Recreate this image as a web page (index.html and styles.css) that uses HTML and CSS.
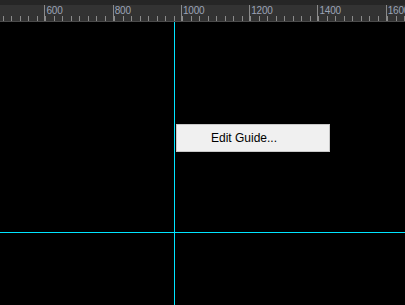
FILE: index.html
```html
<!DOCTYPE html>
<html>
    <head>
        <title>Guides</title>
        <meta charset="utf-8" />
        <link rel="stylesheet" href="styles.css">
    </head>
    <body>
        <div class="topStrip"></div>
        <div class="ruler">
            <div class="rulerTrack">
                <div class="seg"><span></span></div>
                <div class="seg major"><span>600</span></div>
                <div class="seg major"><span>800</span></div>
                <div class="seg major"><span>1000</span></div>
                <div class="seg major"><span>1200</span></div>
                <div class="seg major"><span>1400</span></div>
                <div class="seg major"><span>1600</span></div>
            </div>
        </div>
        <div class="canvas">
            <div class="guide vertical"></div>
            <div class="guide horizontal"></div>
            <div class="contextMenu">
                <div class="menuItem">Edit Guide...</div>
            </div>
        </div>
    </body>
</html>
```

FILE: styles.css
```css
html, body {
    margin: 0;
    height: 100%;
    background: #000;
    overflow: hidden;
}
.topStrip {
    height: 5px;
    background: #262626;
}
.ruler {
    height: 16px;
    background: #333333;
    border-bottom: 1px solid #4a4a4a;
    overflow: hidden;
}
.rulerTrack {
    display: flex;
    margin-left: -23.8px;
    height: 100%;
}
.seg {
    flex: 0 0 68.25px;
    height: 100%;
    box-sizing: border-box;
    background: repeating-linear-gradient(to right, #8a8a8a 0 1px, transparent 1px 8.53px) bottom left / 100% 5px no-repeat;
    border-left: 1px solid #8a8a8a;
    font-family: "Liberation Sans", sans-serif;
    font-size: 10px;
    color: #9ba3b6;
    line-height: 10px;
}
.seg span {
    display: block;
    padding: 1px 0 0 1px;
    letter-spacing: -0.2px;
}
.canvas {
    position: relative;
    height: calc(100% - 22px);
}
.guide {
    position: absolute;
    background: #00e5ff;
}
.vertical {
    left: 174px;
    top: 0;
    bottom: 0;
    width: 1px;
}
.horizontal {
    top: 210px;
    left: 0;
    right: 0;
    height: 1px;
}
.contextMenu {
    position: absolute;
    left: 176px;
    top: 102px;
    width: 152px;
    background: #f0f0f0;
    border: 1px solid #c8c8c8;
}
.menuItem {
    font-family: "Liberation Sans", sans-serif;
    font-size: 12px;
    color: #000;
    height: 26px;
    line-height: 26px;
    padding-left: 34px;
}
```
